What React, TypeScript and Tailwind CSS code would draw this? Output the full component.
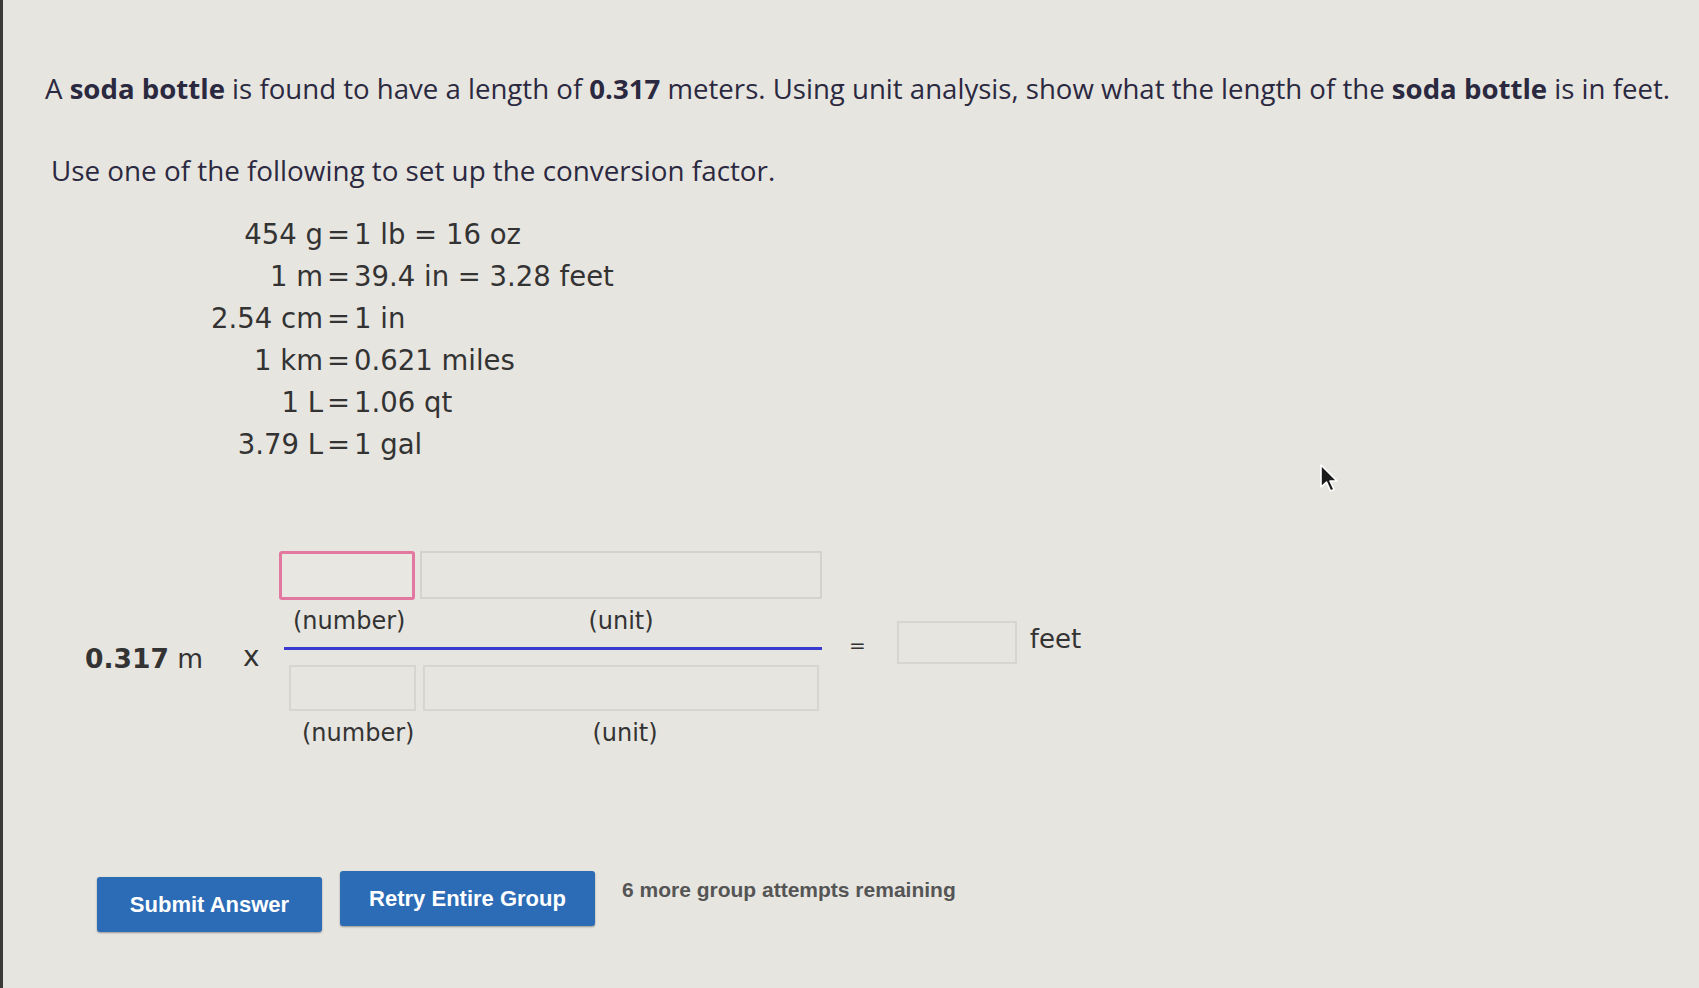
import React from "react";

const verdana = { fontFamily: '"DejaVu Sans", Verdana, sans-serif' };

function Eq() {
  return <span className="mx-[4px]">=</span>;
}

const rows: [string, React.ReactNode][] = [
  ["454 g", <><Eq />1 lb = 16 oz</>],
  ["1 m", <><Eq />39.4 in = 3.28 feet</>],
  ["2.54 cm", <><Eq />1 in</>],
  ["1 km", <><Eq />0.621 miles</>],
  ["1 L", <><Eq />1.06 qt</>],
  ["3.79 L", <><Eq />1 gal</>],
];

export default function App() {
  return (
    <div className="relative min-h-[988px] w-full overflow-hidden bg-[#e7e5e0] border-l-[3px] border-[#3a3a3a]">
      <div className="pl-[42px] pt-[70px]" style={{ fontFamily: '"Open Sans", "Noto Sans", sans-serif' }}>
        <p className="whitespace-nowrap text-[27.6px] leading-[36px] text-[#2b2940]">
          A <b className="font-bold">soda bottle</b> is found to have a length of <b className="font-bold">0.317</b> meters. Using unit
          analysis, show what the length of the <b className="font-bold">soda bottle</b> is in feet.
        </p>
        <p className="mt-[46px] pl-[6px] whitespace-nowrap text-[27.8px] leading-[36px] text-[#2b2940]">
          Use one of the following to set up the conversion factor.
        </p>
      </div>

      <div className="mt-[25px] grid grid-cols-[160px_auto] text-[27.5px] leading-[42px] text-[#333]" style={{ ...verdana, marginLeft: 160 }}>
        {rows.map(([l, r], i) => (
          <React.Fragment key={i}>
            <div className="text-right whitespace-nowrap">{l}</div>
            <div className="whitespace-nowrap">{r}</div>
          </React.Fragment>
        ))}
      </div>

      <div className="mt-[86px] flex items-start pl-[82px] text-[24px] text-[#333]" style={verdana}>
        <div className="mt-[92px] w-[120px] whitespace-nowrap leading-[32px] text-[26.5px]">
          <b className="font-bold">0.317</b> m
        </div>
        <div className="mt-[91px] w-[74px] pl-[38px] leading-[30px] text-[28px]">x</div>
        <div className="flex w-[548px] flex-col">
          <div className="flex gap-[5px]">
            <div className="h-[49px] w-[136px] rounded-[3px] border-[3px] border-[#e277a0] bg-[#e9e7e2]" />
            <div className="h-[48px] w-[402px] border-[2px] border-[#d3d2cd] bg-[#e7e5e0]" />
          </div>
          <div className="mt-[6px] flex leading-[30px]">
            <div className="w-[141px] pl-[14px]">(number)</div>
            <div className="w-[402px] text-center">(unit)</div>
          </div>
          <div className="mt-[11px] ml-[5px] h-[3px] w-[538px] bg-[#3a3ad0]" />
          <div className="mt-[15px] ml-[10px] flex gap-[7px]">
            <div className="h-[46px] w-[127px] border-[2px] border-[#d6d5d0]" />
            <div className="h-[46px] w-[396px] border-[2px] border-[#d6d5d0]" />
          </div>
          <div className="mt-[7px] flex leading-[30px]">
            <div className="w-[141px] pl-[23px]">(number)</div>
            <div className="w-[402px] pl-[8px] text-center">(unit)</div>
          </div>
        </div>
        <div className="mt-[79px] ml-[22px] text-[20px] leading-[30px]">=</div>
        <div className="mt-[70px] ml-[31px] h-[43px] w-[120px] border-[2px] border-[#d6d5d0]" />
        <div className="mt-[71px] ml-[13px] text-[26px] leading-[34px]">feet</div>
      </div>

      <div className="mt-[129px] flex items-center pl-[94px]" style={{ fontFamily: '"Liberation Sans", Arial, sans-serif' }}>
        <button className="h-[55px] w-[225px] rounded-[3px] bg-[#2c6cb6] text-[22px] font-bold text-white shadow-[0_1px_2px_rgba(0,0,0,0.35)]">
          Submit Answer
        </button>
        <button className="ml-[18px] -mt-[12px] h-[55px] w-[255px] rounded-[3px] bg-[#2c6cb6] text-[22px] font-bold text-white shadow-[0_1px_2px_rgba(0,0,0,0.35)]">
          Retry Entire Group
        </button>
        <span className="ml-[27px] -mt-[30px] text-[21px] font-bold text-[#555]">6 more group attempts remaining</span>
      </div>

      <svg className="absolute left-[1316px] top-[463px]" width="22" height="32" viewBox="0 0 22 32">
        <path d="M2 2 L2 24 L7.5 19 L11.5 28 L15 26.5 L11 18 L18 18 Z" fill="#1b1b1b" stroke="#fff" strokeWidth="1.6" strokeLinejoin="round" />
      </svg>
    </div>
  );
}
